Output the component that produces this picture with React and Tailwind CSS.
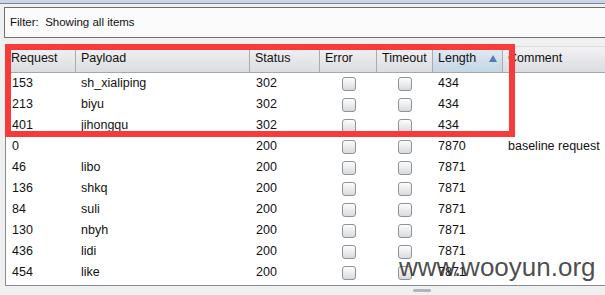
import React from "react";

const rows = [
  { req: "153", payload: "sh_xialiping", status: "302", len: "434", comment: "" },
  { req: "213", payload: "biyu", status: "302", len: "434", comment: "" },
  { req: "401", payload: "jihongqu", status: "302", len: "434", comment: "" },
  { req: "0", payload: "", status: "200", len: "7870", comment: "baseline request" },
  { req: "46", payload: "libo", status: "200", len: "7871", comment: "" },
  { req: "136", payload: "shkq", status: "200", len: "7871", comment: "" },
  { req: "84", payload: "suli", status: "200", len: "7871", comment: "" },
  { req: "130", payload: "nbyh", status: "200", len: "7871", comment: "" },
  { req: "436", payload: "lidi", status: "200", len: "7871", comment: "" },
  { req: "454", payload: "like", status: "200", len: "7871", comment: "" },
];

const cols = "grid grid-cols-[70px_174px_70px_57px_56px_70px_1fr]";

const Check = () => (
  <div className="w-[14px] h-[14px] rounded-[3px] border border-[#8f9296] bg-gradient-to-b from-[#fdfdfd] to-[#d8dadd]" />
);

const HeadCell = ({ children, last, active }) => (
  <div
    className={
      "flex items-center pl-[5px] pb-[2px] " +
      (last ? "" : "border-r border-[#a9abae] ") +
      (active
        ? "bg-gradient-to-b from-[#e3ebf3] to-[#c4d5e4]"
        : "bg-gradient-to-b from-[#f2f2f4] to-[#dcdde1]")
    }
  >
    {children}
  </div>
);

const App = () => {
  return (
    <div
      className="relative w-[605px] h-[295px] overflow-hidden bg-[#f0f0f0] text-[#111] flex flex-col"
      style={{ fontFamily: '"Liberation Sans", Arial, sans-serif' }}
    >
      <div className="h-[4px] bg-[#c8d6e8] border-b border-[#7d8590]" />

      <div className="mt-[3px] ml-[4px] w-[640px] h-[31px] border border-[#707070] bg-[#fbfbfb] flex items-center pl-[5px] text-[11.5px]">
        Filter:&nbsp; Showing all items
      </div>

      <div className="mt-[8px] ml-[5px] w-[640px] h-[240px] border-l border-b border-t border-l-[#868b93] border-b-[#868b93] border-t-[#dcdcdc] bg-white text-[12.5px]">
        <div className={cols + " h-[26px] border-b border-[#a5a7aa]"}>
          <HeadCell>Request</HeadCell>
          <HeadCell>Payload</HeadCell>
          <HeadCell>Status</HeadCell>
          <HeadCell>Error</HeadCell>
          <HeadCell>Timeout</HeadCell>
          <HeadCell active>
            <span className="flex-1">Length</span>
            <svg width="8" height="7" viewBox="0 0 8 7" className="mr-[5px]">
              <polygon points="4,0 8,7 0,7" fill="#4e7db5" />
            </svg>
          </HeadCell>
          <HeadCell last>Comment</HeadCell>
        </div>

        {rows.map((r, i) => (
          <div key={i} className={cols + " h-[21px] items-center"}>
            <div className="pl-[6px]">{r.req}</div>
            <div className="pl-[5px]">{r.payload}</div>
            <div className="pl-[6px]">{r.status}</div>
            <div className="flex justify-center pl-[1px]">
              <Check />
            </div>
            <div className="flex justify-center">
              <Check />
            </div>
            <div className="pl-[5px]">{r.len}</div>
            <div className="pl-[5px] whitespace-nowrap">{r.comment}</div>
          </div>
        ))}
      </div>

      <div className="flex justify-start pl-[413px] pt-[3px]">
        <div className="w-[18px] h-[3px] rounded-[2px] bg-[#b1b4ba]" />
      </div>

      {/* red highlight box */}
      <div className="absolute left-[5px] top-[44px] w-[510px] h-[93px] border-[6px] border-[#f73b3b]" />

      {/* watermark */}
      <div className="absolute left-[399px] top-[254px] text-[26px] leading-none text-[#2e2e2e]/85 whitespace-nowrap">
        www.wooyun.org
      </div>
    </div>
  );
};

export default App;
